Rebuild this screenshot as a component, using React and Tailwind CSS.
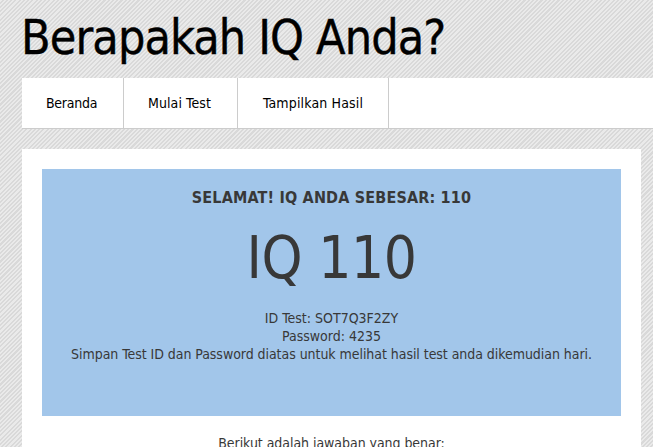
export default function App() {
  return (
    <div className="h-[447px] overflow-hidden bg-[repeating-linear-gradient(135deg,#eaeaea_0,#eaeaea_1.5px,#d9d9d9_1.5px,#d9d9d9_3px)] pl-[22px] font-['DejaVu_Sans_Condensed','Liberation_Sans',sans-serif] text-[#383838]">
      <h1 className="-ml-[1px] h-[78px] pt-[7px] text-[48px] leading-[60px] tracking-[-0.88px] text-black [-webkit-text-stroke:0.4px_black]">Berapakah IQ Anda?</h1>

      {/* nav */}
      <nav className="flex h-[51px] w-[631px] border-b border-[#cccccc] bg-white text-[14px] text-black">
        <a className="flex w-[102px] items-center justify-center border-r border-[#cccccc] pr-[2px] tracking-[-0.25px]">Beranda</a>
        <a className="flex w-[114px] items-center justify-center border-r border-[#cccccc] pr-[2px] tracking-[0.1px]">Mulai Test</a>
        <a className="flex w-[151px] items-center justify-center border-r border-[#cccccc] tracking-[0.15px]">Tampilkan Hasil</a>
      </nav>

      {/* content */}
      <main className="mt-[20px] h-[300px] w-[619px] bg-white px-[20px] pt-[20px] text-center">
        <div className="flex h-[247px] flex-col items-center bg-[#a2c6ea] pt-[19px]">
          <h2 className="text-[16px] leading-[20px] font-bold tracking-[0.17px]">SELAMAT! IQ ANDA SEBESAR: 110</h2>
          <div className="mt-[14px] text-[58px] leading-[72px] tracking-[-0.4px]">IQ 110</div>
          <p className="mt-[15px] text-[14px] leading-[18px]">ID Test: SOT7Q3F2ZY</p>
          <p className="text-[14px] leading-[18px]">Password: 4235</p>
          <p className="text-[14px] leading-[18px] tracking-[-0.05px]">Simpan Test ID dan Password diatas untuk melihat hasil test anda dikemudian hari.</p>
        </div>
        <p className="mt-[18px] text-[14px] leading-[18px] tracking-[-0.05px]">Berikut adalah jawaban yang benar:</p>
      </main>
    </div>
  );
}
